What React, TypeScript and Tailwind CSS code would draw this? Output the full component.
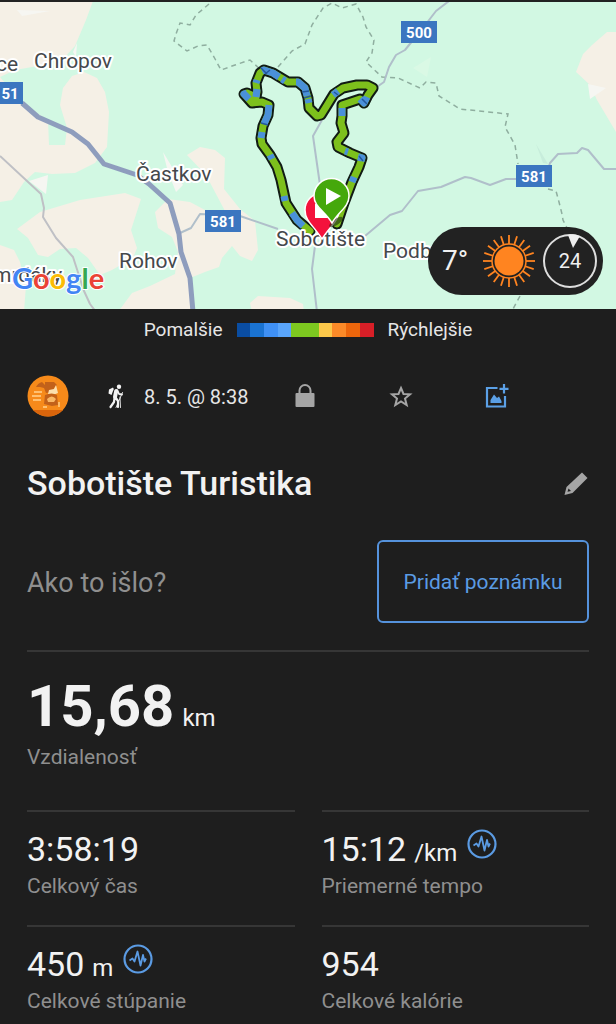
import React from "react";

type Stat = { value: string; unit?: string; label: string; chart?: boolean };

const stats: Stat[] = [
  { value: "3:58:19", label: "Celkový čas" },
  { value: "15:12", unit: "/km", label: "Priemerné tempo", chart: true },
  { value: "450", unit: "m", label: "Celkové stúpanie", chart: true },
  { value: "954", label: "Celkové kalórie" },
];

const legend = [
  "bg-[#0a4da2]",
  "bg-[#1a73d2]",
  "bg-[#3f90f5]",
  "bg-[#5aa5fa]",
  "bg-[#7dc820]",
  "bg-[#7dc820]",
  "bg-[#fcc84a]",
  "bg-[#fb8a28]",
  "bg-[#ec660c]",
  "bg-[#d81f27]",
];

const ROUTE_LEFT =
  "M310 231 L297 220 L286 203 L281 180 L277 167 L270 155 L262 144 L261 138 L263 126 L268 115 L269 105 L262 102 L252 103 L244 94 L247 93 L256 97 L257 92 L256 83 L260 73 L264 70 L273 73 L288 82 L298 82 L305 88 L308 98 L309 108 L317 116 L321 115 L326 107 L334 94 L343 88 L357 85 L367 85 L373 88 L368 95 L364 103";
const ROUTE_RIGHT =
  "M364 102 L360 99 L342 105 L342 116 L341 123 L344 133 L337 142 L338 147 L350 153 L362 158 L359 167 L352 182 L344 203 L337 224";

const BLUE_PARTS = [
  "M303 226 L297 220 L292 213",
  "M285 201 L284 196",
  "M272 159 L270 155",
  "M261 138 L262 132",
  "M264 124 L268 115 L269 105",
  "M256 97 L257 89",
  "M256 83 L257 80",
  "M262 71 L264 70 L273 73 L279 77",
  "M282 79 L285 81",
  "M296 82 L298 82 L305 88 L307 96",
  "M308 99 L309 103",
  "M333 95 L338 91",
  "M367 97 L364 103 L360 99",
  "M342 108 L342 116",
  "M345 151 L348 152",
  "M358 157 L362 158 L361 161",
  "M354 177 L352 182",
  "M249 99 L244 94 L247 93",
];

function Shield({ x, y, w, label, tx }: { x: number; y: number; w: number; label: string; tx: number }) {
  return (
    <g>
      <rect x={x} y={y} width={w} height="22" fill="#3b76c0" />
      <text x={tx} y={y + 17} textAnchor="middle" fill="#fff" fontSize="15" fontWeight="700">
        {label}
      </text>
    </g>
  );
}

function RouteMap() {
  return (
    <svg
      viewBox="0 2 616 307"
      preserveAspectRatio="xMidYMid slice"
      className="block h-[307px] w-full font-['Roboto','Noto_Sans',sans-serif]"
      role="img"
      aria-label="Mapa trasy"
    >
      <rect width="616" height="312" fill="#d2f8e3" />
      <g fill="#f5f0e6">
        <path d="M0 1 H93 L86 20 L75 46 L65 57 L38 66 L15 70 L0 77Z" />
        <path d="M0 77 L20 100 L35 112 L48 120 L49 145 H65 L67 128 L60 105 L63 88 L72 76 L84 72 L97 78 L105 92 L109 112 L107 147 L95 163 L75 173 L52 174 L35 172 L24 182 L12 200 L0 202Z" />
        <path d="M17 229 L40 212 L80 200 L125 193 L141 199 L131 230 L137 248 L133 258 L112 270 L100 275 L88 258 L76 248 L60 249 L48 257 L38 255 L28 238Z" />
        <path d="M0 245 L14 250 L20 262 L26 285 L24 312 H0Z" />
        <path d="M168 199 L190 202 L205 210 L225 211 L206 175 L187 155 L200 147 L215 150 L225 158 L224 189 L240 209 L255 221 L258 250 L252 261 L240 256 L232 246 L222 258 L219 267 L205 272 L190 278 L192 312 H118 L132 293 L150 286 L175 274 L178 252 L172 237 L158 228 L155 212Z" />
        <path d="M252 312 L250 303 L258 296 L290 298 L303 304 L304 312Z" />
        <path d="M616 32 H607 L592 45 L583 54 L576 72 L590 85 L597 100 L616 132Z" />
      </g>
      <g fill="#f6f6f2">
        <path d="M17 10 L50 11 L22 16Z" />
        <path d="M29 181 L48 175 L46 194Z" />
        <path d="M73 52 L77 43 L76 57Z" />
        <path d="M163 152 L175 172 L183 185 L176 192 L168 172Z" />
        <path d="M588 84 L606 88 L590 99Z" />
      </g>
      <path d="M413 68 L431 57 L427 77Z" fill="#daf9e5" />
      <path d="M536 144 L548 164 L543 163Z" fill="#c7eddb" />
      <g fill="none" stroke="#8fae9f" strokeWidth="1.5" strokeDasharray="5 4">
        <path d="M209 4 L196 15 L190 25 L180 23 L176 34 L174 41 L187 51 L198 46 L207 45 L214 57 L221 70 L235 65 L250 60 L262 71" />
        <path d="M278 67 L292 51 L305 44 L312 25 L323 8 L332 3 L342 8 L356 4 L363 17 L366 27 L374 40 L372 53 L366 62 L382 77 L398 78 L420 88 L426 82 L436 83 L439 96 L460 109 L508 114 L505 127 L515 145 L518 164" />
        <path d="M548 189 L556 191 L559 202 L562 214 L563 220 L568 230" />
        <path d="M520 296 L513 309" />
      </g>
      <g fill="none" stroke="#b0bfca" strokeWidth="2" strokeLinejoin="round">
        <path d="M0 156 L41 194 L44 208 L43 217 L56 238 L73 257 L84 291 L90 304 L96 312" stroke="#bfc0c5" />
        <path d="M449 1 L436 11 L426 24 L405 50 L396 55 L389 67 L384 82 L374 89" />
        <path d="M322 120 L313 136 L320 185" />
        <path d="M180 233 L191 228 L200 214 L240 216 L278 229" />
        <path d="M365 236 L390 215 L402 211 L418 191 L441 187 L465 177 L471 178 L490 185 L506 179 L545 179 L550 163 L558 154 L577 153 L582 148 L588 150 L604 169 H616" />
        <path d="M315 246 L312 269 L317 312" />
      </g>
      <path
        d="M22 103 L38 117 L72 132 L88 144 L104 164 L137 175 L149 184 L170 203 L179 234 L181 252 L190 278 L193 312"
        fill="none"
        stroke="#8e9dbd"
        strokeWidth="5"
        strokeLinejoin="round"
      />
      <g fill="none" strokeLinejoin="round" strokeLinecap="round">
        <path d={ROUTE_LEFT} stroke="#111b14" strokeWidth="11" />
        <path d={ROUTE_RIGHT} stroke="#111b14" strokeWidth="11" />
        <path d={ROUTE_LEFT} stroke="#7dc01c" strokeWidth="7" />
        <path d={ROUTE_RIGHT} stroke="#7dc01c" strokeWidth="7" />
      </g>
      <g fill="none" stroke="#4a90d9" strokeWidth="7" strokeLinejoin="round">
        {BLUE_PARTS.map((d) => (
          <path key={d} d={d} />
        ))}
      </g>
      <g fill="none" stroke="#24589c" strokeWidth="1.5">
        <path d="M261 68 L267 74 M265 74 L270 70 M302 92 L309 91 M261 123 L268 125 M304 98 L311 96 M362 99 L367 104 M359 156 L363 161 M334 92 L338 95" />
      </g>
      <Shield x={-4} y={82} w={27} label="51" tx={10} />
      <Shield x={401} y={21} w={36} label="500" tx={419} />
      <Shield x={205} y={210} w={36} label="581" tx={223} />
      <Shield x={516} y={165} w={36} label="581" tx={534} />
      <g
        fill="#45484c"
        stroke="#fff"
        strokeWidth="4"
        strokeLinejoin="round"
        fontSize="21"
        className="[paint-order:stroke]"
      >
        <text x="-4" y="71">ce</text>
        <text x="34" y="68">Chropov</text>
        <text x="136" y="181">Častkov</text>
        <text x="119" y="268">Rohov</text>
        <text x="-7" y="282">mrdáky</text>
        <text x="276" y="246">Sobotište</text>
        <text x="383" y="258">Podbranč</text>
      </g>
      <path
        d="M322 239 C314 226 305 221 305 210 A17 17 0 0 1 339 210 C339 221 330 226 322 239Z"
        fill="#f4123c"
        stroke="#fff"
        strokeWidth="1.5"
      />
      <path d="M315 204 H328 V218 H315Z" fill="#fff" />
      <ellipse cx="336" cy="222" rx="8" ry="3" fill="#1b2b10" opacity="0.6" transform="rotate(-35 336 222)" />
      <path
        d="M332 223 C325 211 314 207 314 196 A17.500 17.500 0 0 1 349 196 C349 207 339 211 332 223Z"
        fill="#45a80b"
        stroke="#fff"
        strokeWidth="1.5"
      />
      <path d="M326 188 V205 L341 196Z" fill="#fff" />
      <g
        fontSize="29"
        fontWeight="700"
        stroke="#fff"
        strokeWidth="2"
        className="font-['Lato','Roboto',sans-serif] [paint-order:stroke]"
      >
        <text x="12" y="289">
          <tspan fill="#4285f4">G</tspan>
          <tspan fill="#ea4335">o</tspan>
          <tspan fill="#fbbc05">o</tspan>
          <tspan fill="#4285f4">g</tspan>
          <tspan fill="#34a853">l</tspan>
          <tspan fill="#ea4335">e</tspan>
        </text>
      </g>
    </svg>
  );
}

function Sun() {
  return (
    <svg viewBox="0 0 54 54" className="size-[54px]" aria-hidden="true">
      <circle cx="27" cy="27" r="14.500" fill="#ff8420" />
      <circle cx="27" cy="27" r="17" fill="none" stroke="#ff8420" strokeWidth="1.5" />
      <g stroke="#ff8420" strokeWidth="1.8">
        {Array.from({ length: 20 }, (_, i) => (
          <path key={i} d="M27 1 V10" transform={`rotate(${i * 18} 27 27)`} />
        ))}
      </g>
    </svg>
  );
}

function Weather() {
  return (
    <div className="absolute right-[13px] bottom-[14px] flex h-[68px] w-[175px] items-center rounded-full bg-[#222222] pr-[6px] pl-[14px] text-[#f0f0f0]">
      <span className="w-[40px] text-[28px] leading-8">7°</span>
      <Sun />
      <div className="relative ml-auto flex size-[54px] items-center justify-center rounded-full border-2 border-[#dedede] text-[20px]">
        24
        <svg viewBox="0 0 14 14" className="absolute -top-[2px] left-[22px] size-[14px]" aria-hidden="true">
          <path d="M1 1 Q7 -1 13 2 L6 14Z" fill="#eeeeee" />
        </svg>
      </div>
    </div>
  );
}

function Avatar() {
  return (
    <svg viewBox="0 0 42 42" className="size-[42px]" role="img" aria-label="Profil">
      <circle cx="21" cy="21" r="20.5" fill="#f68a1a" />
      <path d="M6 35 A20.5 20.5 0 0 0 36 35Z" fill="#d9650c" />
      <path d="M9 12 Q11 8 15 7 L18 10 L18 7 H27 L30 10 L27 13 L26 17 L19 18 L17 13 L13 12Z" fill="#c2611a" />
      <path d="M22 15 L27 14 L29 10 L31 18 L26 20 L21 19Z" fill="#fbdfae" />
      <path d="M18 20 Q25 17 30 20 L31 30 L25 31 L17 29Z" fill="#c2611a" />
      <path d="M20 24 Q25 19 29 24 L27 27 L21 27Z" fill="#f9b765" />
      <path d="M7 17 H15 M5 21 H14 M6 25 H14 M16 32 H20 M32 27 V32" stroke="#ffc070" strokeWidth="1.8" />
    </svg>
  );
}

function Hiker() {
  return (
    <svg viewBox="0 0 16 25" className="h-[25px] w-4" role="img" aria-label="Turistika">
      <g fill="none" stroke="#f4f4f4" strokeLinecap="round" strokeLinejoin="round">
        <path d="M8.200 7 L7 13" strokeWidth="4" />
        <path d="M6.500 14 L6 18 L2.500 23 M7.500 13.500 L10 17 L10 23" strokeWidth="2.200" />
        <path d="M9.500 6.500 L11 10 L14 10.500" strokeWidth="1.800" />
        <path d="M14.500 8.500 L8 23.500 M12 13 L12.500 23.500" strokeWidth="0.900" />
      </g>
      <circle cx="11" cy="2.800" r="2.200" fill="#f4f4f4" />
      <path d="M5 3.500 L1 5.500 L0.500 9.500 L3.500 11 L5.800 5Z" fill="#f4f4f4" />
    </svg>
  );
}

function Chart() {
  return (
    <svg viewBox="0 0 30 30" className="size-[30px]" fill="none" stroke="#5b9be3" aria-hidden="true">
      <circle cx="15" cy="15" r="13.500" strokeWidth="2.200" />
      <path
        d="M6.500 16.500 L9.500 14.500 L11.500 17.500 L14.500 7.500 L17.500 21.500 L20 11 L21.500 17.500 L23 14.500"
        strokeWidth="1.800"
        strokeLinejoin="round"
      />
    </svg>
  );
}

function StatCell({ stat }: { stat: Stat }) {
  return (
    <div className="h-[115px] border-t-2 border-[#363636] pt-[15px]">
      <dd className="flex h-[45px] items-baseline text-[34px] leading-[44px] text-[#f2f2f2]">
        {stat.value}
        {stat.unit && <span className="ml-2 text-[24px]">{stat.unit}</span>}
        {stat.chart && (
          <button type="button" aria-label={`Graf: ${stat.label}`} className="ml-[10px] self-start pt-[2px]">
            <Chart />
          </button>
        )}
      </dd>
      <dt className="text-[21px] leading-[28px] text-[#8f8f8f]">{stat.label}</dt>
    </div>
  );
}

export default function App() {
  return (
    <main className="min-h-screen w-full overflow-hidden bg-[#1e1e1e] font-['Roboto','Noto_Sans',sans-serif] text-[#e6e6e6]">
      <section className="relative border-t-2 border-[#222222]">
        <RouteMap />
        <Weather />
      </section>

      <div className="mt-[9px] flex h-6 items-center justify-center gap-[14px] text-[19px]">
        <span>Pomalšie</span>
        <div className="flex w-[137px]">
          {legend.map((c, i) => (
            <span key={i} className={`h-[14px] flex-1 ${c}`} />
          ))}
        </div>
        <span>Rýchlejšie</span>
      </div>

      <div className="mt-[33px] flex h-[42px] items-center px-[27px]">
        <Avatar />
        <span className="ml-[39px] flex items-center gap-5 text-[20px]">
          <Hiker />
          <span className="pt-[2px]">8. 5. @ 8:38</span>
        </span>
        <button type="button" aria-label="Súkromie" className="ml-[47px]">
          <svg viewBox="0 0 20 24" className="h-6 w-5">
            <rect x="0.500" y="9" width="19" height="14" rx="1" fill="#a5a5a5" />
            <path d="M4.500 10 V6.500 A5.500 5.500 0 0 1 15.500 6.500 V10" fill="none" stroke="#a5a5a5" strokeWidth="2" />
          </svg>
        </button>
        <button type="button" aria-label="Obľúbené" className="ml-[74px]">
          <svg viewBox="0 0 24 24" className="size-6" fill="none" stroke="#a5a5a5" strokeWidth="2">
            <path d="M12 4 L14.500 10 L21 10.300 L16 14.500 L17.700 21 L12 17.500 L6.300 21 L8 14.500 L3 10.300 L9.500 10Z" />
          </svg>
        </button>
        <button type="button" aria-label="Pridať fotku" className="ml-[71px]">
          <svg viewBox="0 0 26 26" className="size-[26px]" fill="none" stroke="#5ba0e6" strokeWidth="2.200">
            <path d="M13.500 5 H3 V23.500 H21 V13" />
            <path d="M20 1 V10.500 M15.500 5.800 H24.500" />
            <path d="M6.500 20 V17 L10 11.500 L13 15 L15 13.500 L17.500 18 V20Z" fill="#5ba0e6" stroke="none" />
          </svg>
        </button>
      </div>

      <div className="mt-[42px] flex h-[48px] items-center justify-between px-[27px]">
        <h1 className="text-[34px] font-medium text-[#f2f2f2]">Sobotište Turistika</h1>
        <button type="button" aria-label="Upraviť názov">
          <svg viewBox="0 0 26 26" className="size-[26px]">
            <path d="M19 2.500 L24.500 8 L9.500 23 L1.500 25 L3.500 17Z" fill="#a5a5a5" />
            <path d="M5.500 18.500 L8 21 L4.500 21.800Z" fill="#1e1e1e" />
          </svg>
        </button>
      </div>

      <div className="mx-[27px] mt-[33px] flex items-center justify-between">
        <p className="pt-1 text-[27px] text-[#8f8f8f]">Ako to išlo?</p>
        <button
          type="button"
          className="h-[83px] w-[212px] rounded-md border-2 border-[#5592dc] pt-[2px] text-[21px] text-[#5b9be3]"
        >
          Pridať poznámku
        </button>
      </div>

      <dl className="mx-[27px] mt-[27px]">
        <div className="h-[160px] border-t-2 border-[#363636] pt-[17px]">
          <dd className="flex h-[70px] items-baseline text-[58px] leading-[74px] font-bold text-[#f2f2f2]">
            15,68<span className="ml-2 text-[24px] font-normal">km</span>
          </dd>
          <dt className="mt-[4px] text-[21px] leading-[28px] text-[#8f8f8f]">Vzdialenosť</dt>
        </div>
        <div className="grid grid-cols-2 gap-x-[27px]">
          {stats.map((s) => (
            <StatCell key={s.label} stat={s} />
          ))}
        </div>
      </dl>
    </main>
  );
}
